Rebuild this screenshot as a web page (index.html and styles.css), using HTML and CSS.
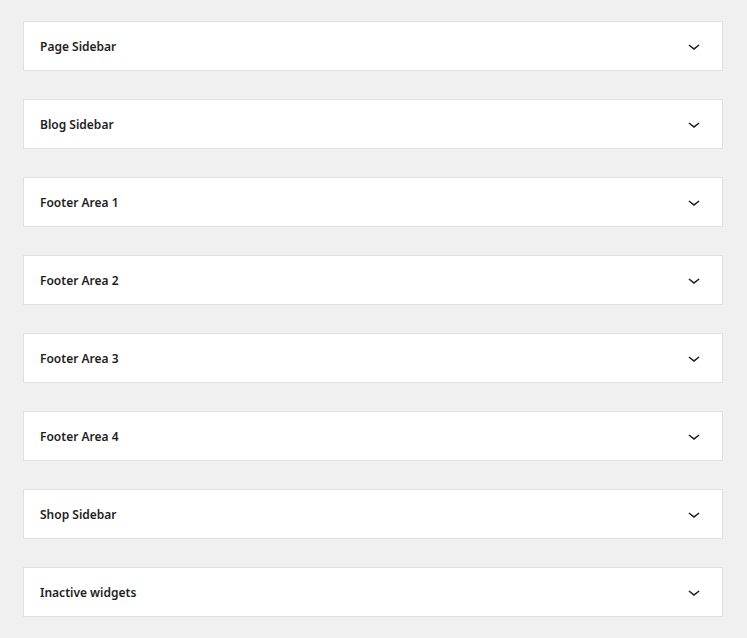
FILE: index.html
```html
<!DOCTYPE html>
<html>
<head>
<meta charset="utf-8">
<link rel="stylesheet" href="styles.css">
</head>
<body>
<div class="list">
  <div class="panel"><span class="title">Page Sidebar</span><svg class="chev" viewBox="0 0 24 24" width="24" height="24"><path d="M17.5 11.6L12 16l-5.5-4.4.9-1.2L12 14l4.6-3.6 1 1.2z"/></svg></div>
  <div class="panel"><span class="title">Blog Sidebar</span><svg class="chev" viewBox="0 0 24 24" width="24" height="24"><path d="M17.5 11.6L12 16l-5.5-4.4.9-1.2L12 14l4.6-3.6 1 1.2z"/></svg></div>
  <div class="panel"><span class="title">Footer Area 1</span><svg class="chev" viewBox="0 0 24 24" width="24" height="24"><path d="M17.5 11.6L12 16l-5.5-4.4.9-1.2L12 14l4.6-3.6 1 1.2z"/></svg></div>
  <div class="panel"><span class="title">Footer Area 2</span><svg class="chev" viewBox="0 0 24 24" width="24" height="24"><path d="M17.5 11.6L12 16l-5.5-4.4.9-1.2L12 14l4.6-3.6 1 1.2z"/></svg></div>
  <div class="panel"><span class="title">Footer Area 3</span><svg class="chev" viewBox="0 0 24 24" width="24" height="24"><path d="M17.5 11.6L12 16l-5.5-4.4.9-1.2L12 14l4.6-3.6 1 1.2z"/></svg></div>
  <div class="panel"><span class="title">Footer Area 4</span><svg class="chev" viewBox="0 0 24 24" width="24" height="24"><path d="M17.5 11.6L12 16l-5.5-4.4.9-1.2L12 14l4.6-3.6 1 1.2z"/></svg></div>
  <div class="panel"><span class="title">Shop Sidebar</span><svg class="chev" viewBox="0 0 24 24" width="24" height="24"><path d="M17.5 11.6L12 16l-5.5-4.4.9-1.2L12 14l4.6-3.6 1 1.2z"/></svg></div>
  <div class="panel"><span class="title">Inactive widgets</span><svg class="chev" viewBox="0 0 24 24" width="24" height="24"><path d="M17.5 11.6L12 16l-5.5-4.4.9-1.2L12 14l4.6-3.6 1 1.2z"/></svg></div>
</div>
</body>
</html>
```

FILE: styles.css
```css
html, body {
  margin: 0;
  background: #f0f0f0;
}
body {
  padding: 21px 24px 21px 23px;
  font-family: "Noto Sans", "Open Sans", sans-serif;
}
.list {
  width: 700px;
  display: flex;
  flex-direction: column;
  gap: 28px;
}
.panel {
  box-sizing: border-box;
  height: 50px;
  background: #fff;
  border: 1px solid #e0e0e0;
  display: flex;
  align-items: center;
  justify-content: space-between;
  padding: 0 16px;
}
.title {
  font-size: 12px;
  font-weight: 600;
  color: #1e1e1e;
  line-height: 16px;
  padding-top: 2px;
}
.chev {
  fill: #1e1e1e;
  display: block;
}
```
